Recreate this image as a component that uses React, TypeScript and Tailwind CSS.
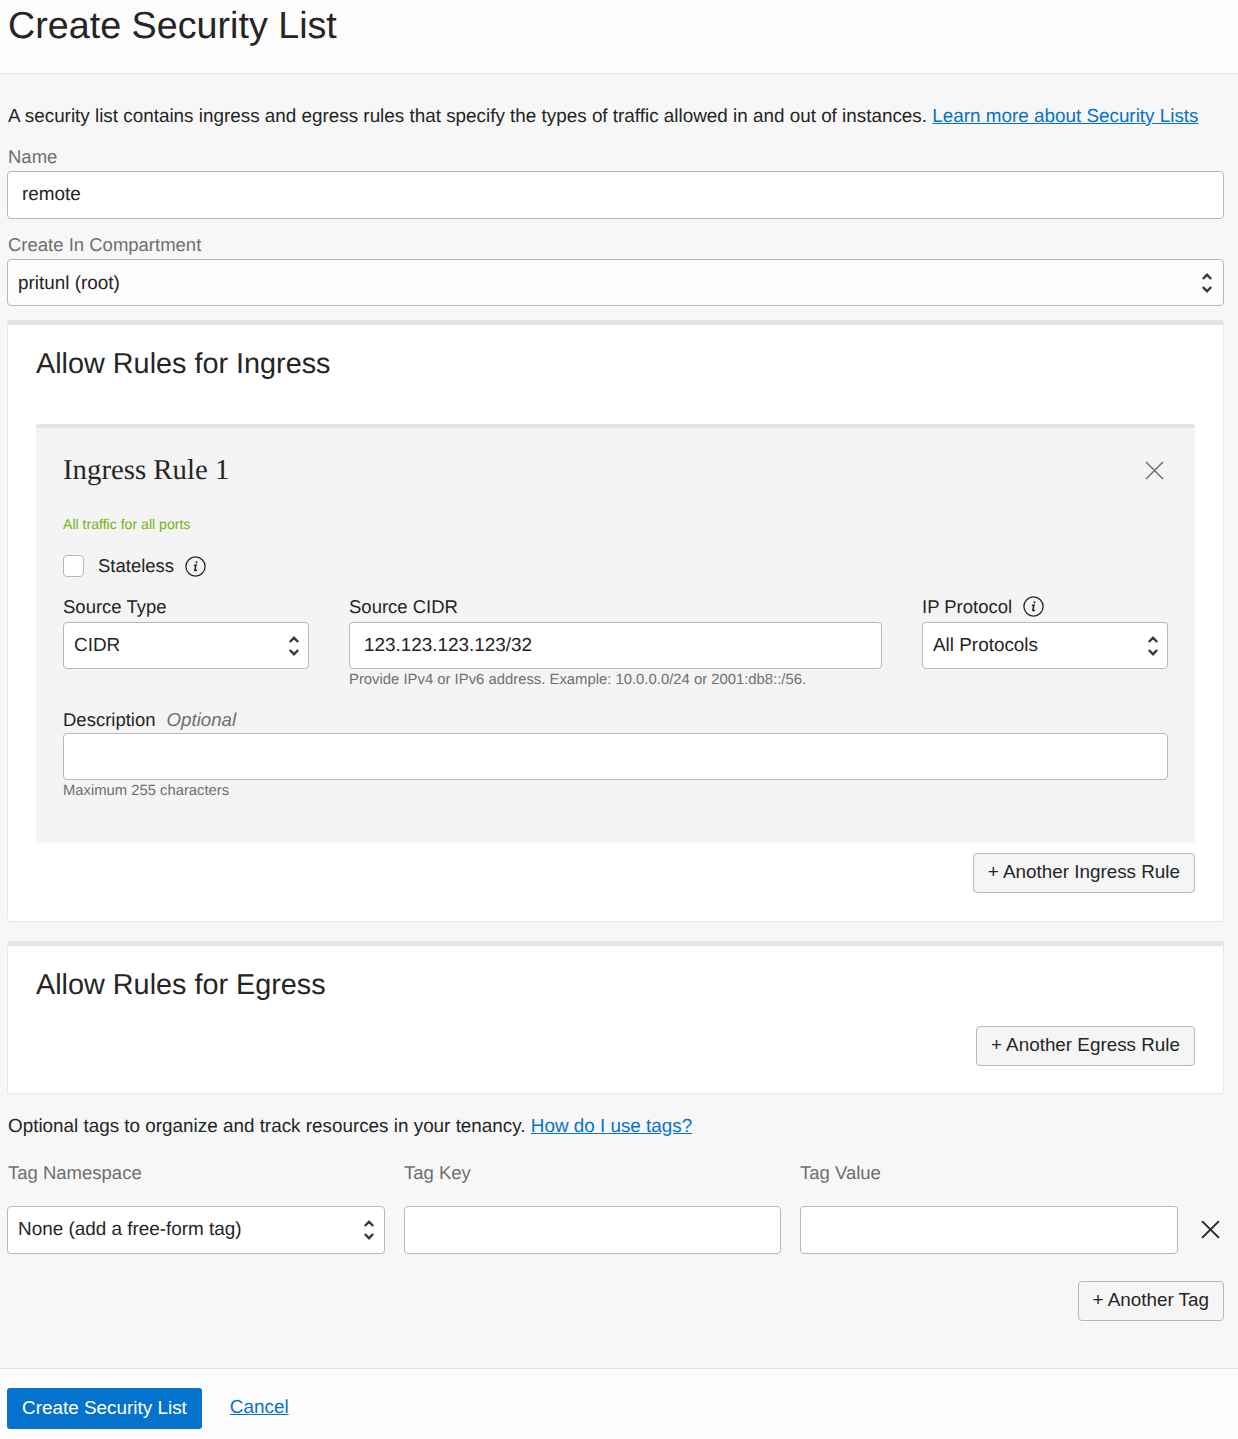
const labelGray = "text-[18.5px] leading-[22px] text-[#6f6f6f]";
const labelDark = "text-[18.5px] leading-[22px] text-[#252525]";
const inputBox = "h-[47px] rounded-[4px] border border-[#b5b8c4] bg-white flex items-center text-[18.9px] text-[#252525]";
const linkText = "text-[#0572ce] underline";
const addButton =
  "h-[40px] rounded-[4px] border border-[#b5b8c4] bg-[#f5f5f6] px-[14px] pb-[2px] text-[18.85px] text-[#252525]";

function Chevrons() {
  return (
    <svg width="12" height="22" viewBox="0 0 12 22" fill="none" stroke="#3a3a3a" strokeWidth="2.4" className="shrink-0">
      <path d="M1.8 7 L6 2.8 L10.2 7" />
      <path d="M1.8 15 L6 19.2 L10.2 15" />
    </svg>
  );
}

function InfoIcon() {
  return (
    <svg width="21" height="21" viewBox="0 0 21 21" fill="none" stroke="#252525" className="shrink-0">
      <circle cx="10.5" cy="10.5" r="9.6" strokeWidth="1.3" />
      <path d="M8.9 9.4 L11 9 L9.8 14 Q9.7 15.2 11.8 14" strokeWidth="1.5" />
      <circle cx="11.5" cy="6.2" r="1" fill="#252525" stroke="none" />
    </svg>
  );
}

function CloseIcon({ size, color, width }: { size: number; color: string; width: number }) {
  return (
    <svg width={size} height={size} viewBox="0 0 18 18" fill="none" stroke={color} strokeWidth={width}>
      <path d="M1 1 L17 17 M17 1 L1 17" />
    </svg>
  );
}

function SelectBox({ value, pr, textTop = "pt-[1px]" }: { value: string; pr: string; textTop?: string }) {
  return (
    <div className={`${inputBox} justify-between pl-[10px] ${pr}`}>
      <span className={textTop}>{value}</span>
      <Chevrons />
    </div>
  );
}

export default function App() {
  return (
    <div className="w-[1238px] h-[1439px] overflow-hidden bg-[#f7f7f7] font-['Liberation_Sans',Arial,sans-serif] text-[#252525] [text-rendering:geometricPrecision]">
      {/* Header */}
      <div className="h-[74px] border-b border-[#e5e5e5] bg-[#fcfcfc] pl-[8px]">
        <h1 className="text-[37.7px] leading-[51px] text-[#252525]">Create Security List</h1>
      </div>

      <div className="pl-[7px] pr-[14px]">
        <p className="mt-[31px] pl-[1px] text-[18.87px] leading-[22px]">
          A security list contains ingress and egress rules that specify the types of traffic allowed in and out of instances.{" "}
          <span className={linkText}>Learn more about Security Lists</span>
        </p>

        <div className={`mt-[19px] pl-[1px] ${labelGray}`}>Name</div>
        <div className={`${inputBox} mt-[3px] h-[48px] pl-[14px]`}>remote</div>

        <div className={`mt-[15px] pl-[1px] ${labelGray}`}>Create In Compartment</div>
        <div className="mt-[3px] [&>div]:bg-[#fcfcfc]">
          <SelectBox value="pritunl (root)" pr="pr-[10px]" textTop="pt-[3px]" />
        </div>

        {/* Ingress */}
        <section className="mt-[14px] h-[602px] rounded-[3px] border border-t-[5px] border-[#e8e8ea] border-t-[#e4e5e7] bg-white px-[28px] pt-[22px]">
          <h2 className="text-[28.8px] leading-[34px]">Allow Rules for Ingress</h2>

          <div className="mt-[43px] h-[419px] rounded-[3px] border-t-[4px] border-[#e4e5e7] bg-[#f4f4f5] px-[27px]">
            <div className="flex items-center justify-between pt-[24px] pr-[4px]">
              <h3 className="font-['Liberation_Serif',serif] text-[28.8px] leading-[36px]">Ingress Rule 1</h3>
              <CloseIcon size={19} color="#6f6f6f" width={1.4} />
            </div>
            <div className="mt-[27px] text-[14.1px] leading-[18px] text-[#6fb60e]">All traffic for all ports</div>

            <div className="mt-[22px] flex items-center">
              <div className="h-[22px] w-[21px] rounded-[4px] border border-[#b5b8c4] bg-white" />
              <span className={`ml-[14px] ${labelDark}`}>Stateless</span>
              <span className="ml-[11px]"><InfoIcon /></span>
            </div>

            <div className="mt-[19px] grid grid-cols-[246px_533px_246px] gap-x-[40px]">
              <div>
                <div className={`${labelDark} h-[26px]`}>Source Type</div>
                <SelectBox value="CIDR" pr="pr-[8px]" />
              </div>
              <div>
                <div className={`${labelDark} h-[26px]`}>Source CIDR</div>
                <div className={`${inputBox} pl-[14px]`}><span className="pt-[2px]">123.123.123.123/32</span></div>
                <div className="mt-[2px] text-[14.85px] leading-[18px] text-[#6f6f6f]">
                  Provide IPv4 or IPv6 address. Example: 10.0.0.0/24 or 2001:db8::/56.
                </div>
              </div>
              <div>
                <div className={`${labelDark} flex h-[26px] items-start gap-[11px]`}>
                  IP Protocol
                  <InfoIcon />
                </div>
                <SelectBox value="All Protocols" pr="pr-[8px]" />
              </div>
            </div>

            <div className={`mt-[20px] flex h-[24px] ${labelDark}`}>
              Description
              <span className="ml-[11px] text-[18.7px] italic text-[#6f6f6f]">Optional</span>
            </div>
            <div className={inputBox} />
            <div className="mt-[2px] text-[14.8px] leading-[18px] text-[#6f6f6f]">Maximum 255 characters</div>
          </div>

          <div className="mt-[10px] flex justify-end">
            <button className={addButton}>+ Another Ingress Rule</button>
          </div>
        </section>

        {/* Egress */}
        <section className="mt-[19px] h-[153px] rounded-[3px] border border-t-[5px] border-[#e8e8ea] border-t-[#e4e5e7] bg-white px-[28px] pt-[22px]">
          <h2 className="text-[28.8px] leading-[34px]">Allow Rules for Egress</h2>
          <div className="mt-[24px] flex justify-end">
            <button className={addButton}>+ Another Egress Rule</button>
          </div>
        </section>

        {/* Tags */}
        <p className="mt-[21px] pl-[1px] text-[18.87px] leading-[22px]">
          Optional tags to organize and track resources in your tenancy.{" "}
          <span className={linkText}>How do I use tags?</span>
        </p>

        <div className="mt-[25px] grid grid-cols-[378px_377px_378px] gap-x-[19px]">
          <div className={`pl-[1px] ${labelGray}`}>Tag Namespace</div>
          <div className={labelGray}>Tag Key</div>
          <div className={labelGray}>Tag Value</div>
        </div>
        <div className="mt-[22px] flex items-center">
          <div className="grid grid-cols-[378px_377px_378px] gap-x-[19px]">
            <div className="[&>div]:h-[48px]">
              <SelectBox value="None (add a free-form tag)" pr="pr-[9px]" />
            </div>
            <div className={`${inputBox} h-[48px]`} />
            <div className={`${inputBox} h-[48px]`} />
          </div>
          <span className="ml-[23px] -mt-[2px]">
            <CloseIcon size={19} color="#252525" width={1.8} />
          </span>
        </div>

        <div className="mt-[27px] flex justify-end">
          <button className={addButton}>+ Another Tag</button>
        </div>
      </div>

      {/* Footer */}
      <div className="mt-[47px] flex h-[71px] items-start border-t border-[#e5e5e5] bg-[#fcfcfc] pl-[7px] pt-[19px]">
        <button className="h-[41px] rounded-[3px] bg-[#0572ce] px-[15px] pb-[1px] text-[18.9px] text-white">Create Security List</button>
        <span className={`ml-[28px] mt-[9px] text-[18.9px] leading-[22px] ${linkText}`}>Cancel</span>
      </div>
    </div>
  );
}
